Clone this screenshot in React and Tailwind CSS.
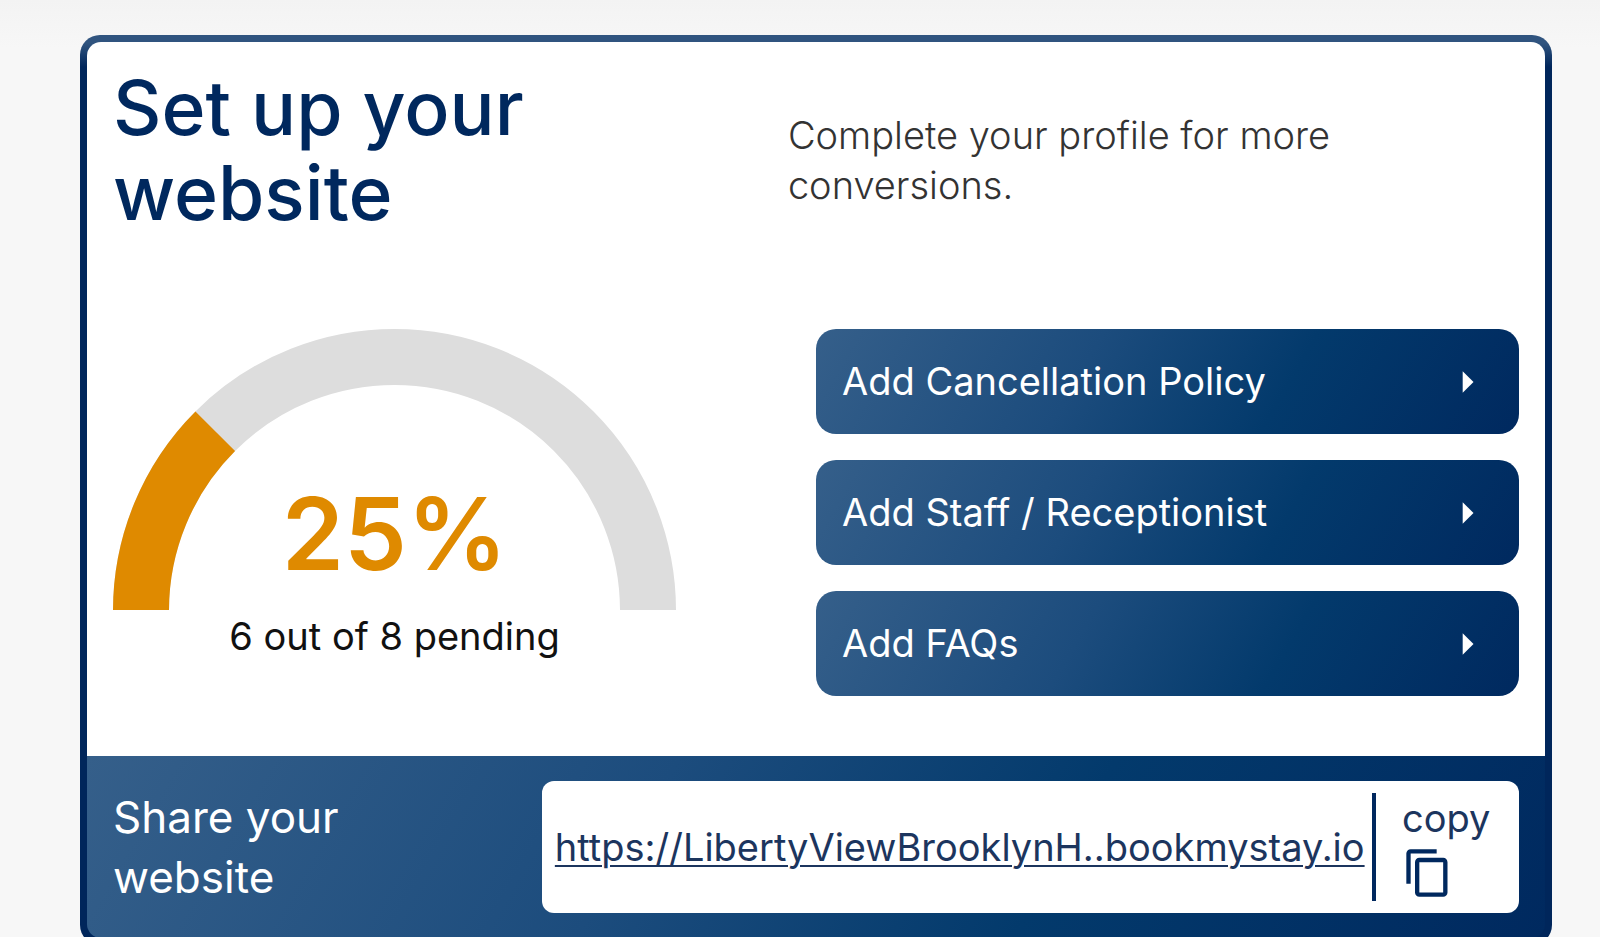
import { MdArrowRight, MdContentCopy } from "react-icons/md";

const tasks = ["Add Cancellation Policy", "Add Staff / Receptionist", "Add FAQs"];

function Gauge({ done, total }) {
  const share = done / total;
  return (
    <div className="relative w-full max-w-[563px]">
      <svg viewBox="0 0 563 281" className="block w-full" aria-hidden="true">
        <path d="M28 281.5A253.5 253.5 0 0 1 535 281.5" fill="none" stroke="#dddddd" strokeWidth="56" />
        <path
          d="M28 281.5A253.5 253.5 0 0 1 535 281.5"
          fill="none"
          stroke="#df8a00"
          strokeWidth="56"
          pathLength="100"
          strokeDasharray={`${share * 100} 200`}
        />
      </svg>
      <p className="absolute inset-x-0 bottom-4 text-center text-[100px] leading-[120px] font-semibold text-[#df8a00]">
        {share * 100}%
      </p>
    </div>
  );
}

function TaskButton({ label }) {
  return (
    <button
      type="button"
      className="flex h-[105px] items-center justify-between rounded-[20px] bg-linear-[120deg,#355f8a_0%,#1c4c7d_38%,#033a6c_66%,#00295f_100%] px-[26px] text-left text-[38px] text-white"
    >
      <span>{label}</span>
      <MdArrowRight className="size-[52px]" aria-hidden="true" />
    </button>
  );
}

export default function App() {
  return (
    <div className="min-h-screen bg-[#f7f7f7] bg-linear-[180deg,#f3f3f3_0px,#f7f7f7_48px] pt-[35px] pr-[3%] pl-[5%] font-['Inter',sans-serif]">
      <main className="rounded-[20px] bg-linear-[180deg,#30547f_8px,#00265b_32px] p-[7px]">
        <section className="rounded-t-[14px] bg-white px-[26px] pb-[60px]">
          <header className="flex items-start pt-[23px]">
            <div className="w-[48%] shrink-0">
              <h1 className="max-w-[460px] text-[75px] leading-[85px] font-medium text-[#00285e]">
                Set up your website
              </h1>
            </div>
            <p className="max-w-[600px] pt-[45px] text-[38px] leading-[50px] font-light text-[#333]">
              Complete your profile for more conversions.
            </p>
          </header>
          <div className="mt-[94px] grid grid-cols-2">
            <div className="max-w-[563px]">
              <Gauge done={2} total={8} />
              <p className="text-center text-[38px] leading-[52px] text-[#111]">6 out of 8 pending</p>
            </div>
            <div className="flex flex-col gap-[26px]">
              {tasks.map((label) => (
                <TaskButton key={label} label={label} />
              ))}
            </div>
          </div>
        </section>
        <footer className="flex items-center justify-between rounded-b-[14px] bg-linear-[120deg,#355f8a_0%,#1c4c7d_38%,#033a6c_66%,#00295f_100%] px-[26px] py-[25px]">
          <p className="max-w-[260px] text-[44px] leading-[60px] text-white">Share your website</p>
          <div className="flex h-[132px] w-[69.5%] items-center rounded-xl bg-white pl-[13px] text-[#00285e]">
            <a href="https://LibertyViewBrooklynH..bookmystay.io" className="grow text-[38px] whitespace-nowrap text-[#1c355e] underline decoration-2 underline-offset-4">
              https://LibertyViewBrooklynH..bookmystay.io
            </a>
            <button type="button" className="flex h-[108px] w-[147px] shrink-0 flex-col items-start border-l-4 border-[#00285e] pl-[26px] text-left">
              <span className="text-[38px] leading-[50px] text-[#1c355e]">copy</span>
              <MdContentCopy className="mt-1 size-[52px]" aria-hidden="true" />
            </button>
          </div>
        </footer>
      </main>
    </div>
  );
}
